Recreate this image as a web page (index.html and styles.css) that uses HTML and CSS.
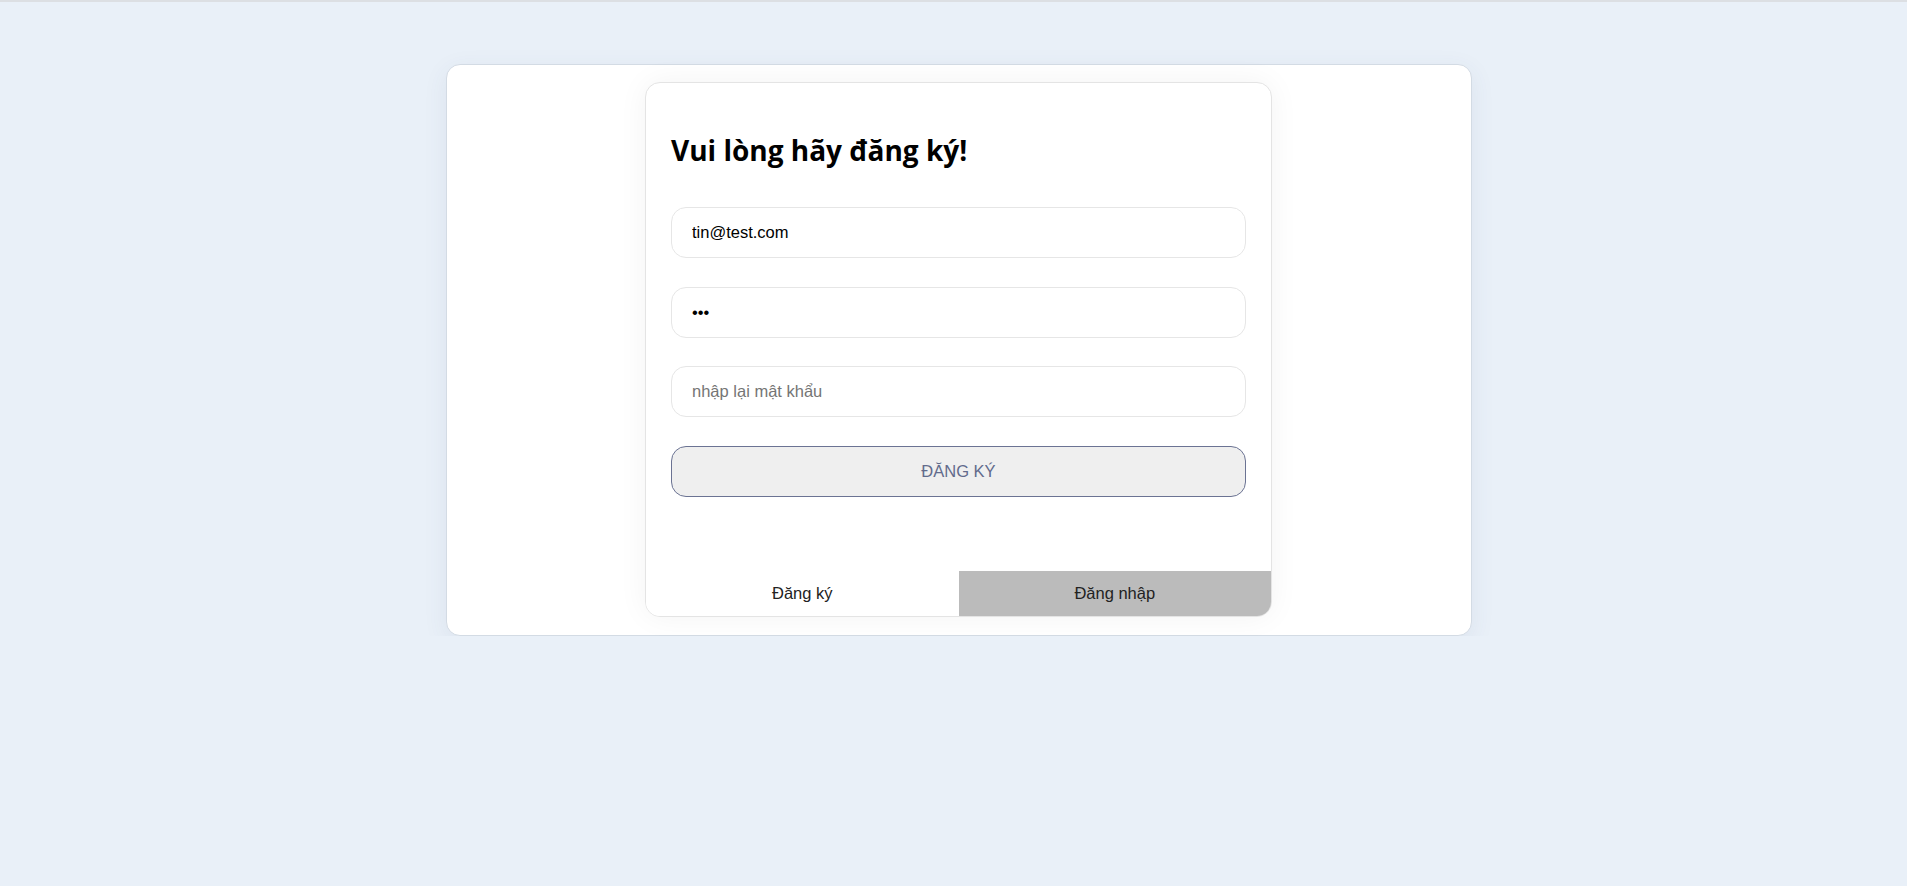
FILE: index.html
```html
<!DOCTYPE html>
<html lang="vi">
<head>
<meta charset="utf-8">
<title>Đăng ký</title>
<link rel="stylesheet" href="styles.css">
</head>
<body>
<div class="topline"></div>
<main class="page">
  <section class="outer-card">
    <div class="auth-card">
      <h2 class="title">Vui lòng hãy đăng ký!</h2>
      <form class="form">
        <input class="field" type="email" value="tin@test.com">
        <input class="field" type="password" value="abc">
        <input class="field" type="password" placeholder="nhập lại mật khẩu">
        <button class="submit" type="button">ĐĂNG KÝ</button>
      </form>
      <div class="tabs">
        <div class="tab tab-active">Đăng ký</div>
        <div class="tab tab-inactive">Đăng nhập</div>
      </div>
    </div>
  </section>
</main>
</body>
</html>
```

FILE: styles.css
```css
html, body {
  margin: 0;
  padding: 0;
  background: #e9f0f8;
  font-family: "Liberation Sans", Arial, sans-serif;
}

.topline {
  height: 2px;
  background: #dcdfe3;
}

.page {
  display: flex;
  justify-content: center;
  padding: 62px 0 0 10px;
}

.outer-card {
  box-sizing: border-box;
  width: 1026px;
  background: #ffffff;
  border: 1px solid #d3dbe4;
  border-radius: 14px;
  padding: 17px 0 18px;
  display: flex;
  justify-content: center;
  box-shadow: 0 6px 24px rgba(60, 80, 110, 0.08);
}

.auth-card {
  box-sizing: border-box;
  width: 627px;
  background: #ffffff;
  border: 1px solid #e4e4e4;
  border-radius: 15px;
  padding: 50px 0 0;
  overflow: hidden;
  box-shadow: 0 0 30px rgba(0, 0, 0, 0.05);
}

.title {
  margin: 0 25px;
  font-family: "Open Sans", Lato, sans-serif;
  font-weight: 700;
  font-size: 28px;
  line-height: 35px;
  color: #000;
}

.form {
  display: flex;
  flex-direction: column;
  gap: 28.5px;
  margin: 39px 25px 0;
}

.field {
  box-sizing: border-box;
  height: 51px;
  width: 100%;
  border: 1px solid #e6e6e6;
  border-radius: 15px;
  padding: 0 20px;
  font-family: "Liberation Sans", Arial, sans-serif;
  font-size: 16.5px;
  color: #000;
  background: #fff;
  outline: none;
}

.field::placeholder {
  color: #757575;
}

.submit {
  box-sizing: border-box;
  height: 51px;
  width: 100%;
  border: 1px solid #6b7393;
  border-radius: 15px;
  background: #efefef;
  color: #626b8c;
  font-family: "Liberation Sans", Arial, sans-serif;
  font-size: 16.5px;
}

.tabs {
  display: flex;
  margin-top: 74.5px;
  height: 45px;
}

.tab {
  flex: 1;
  display: flex;
  align-items: center;
  justify-content: center;
  font-size: 16.5px;
  color: #222;
}

.tab-active {
  background: #ffffff;
}

.tab-inactive {
  background: #bbbbbb;
}
```
